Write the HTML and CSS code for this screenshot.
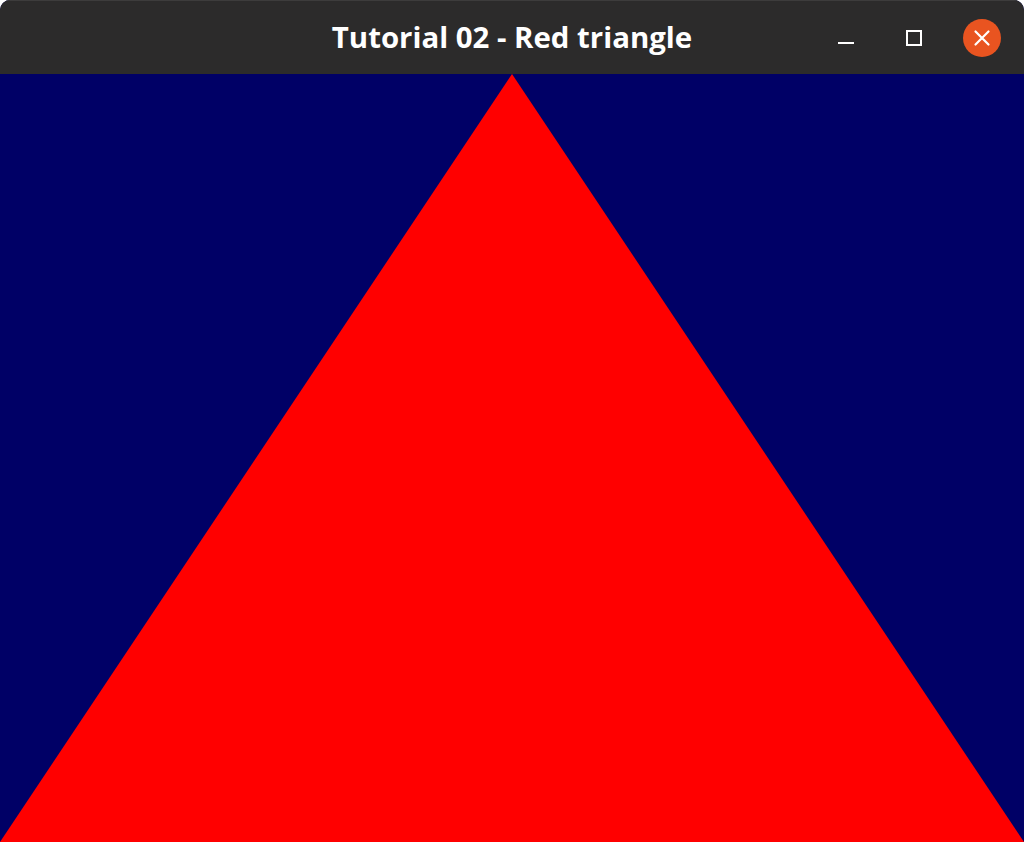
FILE: index.html
```html
<!DOCTYPE html>
<html>
<head>
  <title>Tutorial 02 - Red triangle</title>
  <meta name="viewport" content="width=device-width, initial-scale=1">
  <link rel="stylesheet" href="styles.css">
</head>
<body>
  <div class="window">
    <!-- Title bar -->
    <div class="titlebar">
      <span class="title">Tutorial 02 - Red triangle</span>
      <div class="controls">
        <button class="ctl minimize" aria-label="Minimize">
          <svg width="18" height="18" viewBox="0 0 18 18"><rect x="1" y="13" width="16" height="2" fill="#ffffff"/></svg>
        </button>
        <button class="ctl maximize" aria-label="Maximize">
          <svg width="18" height="18" viewBox="0 0 18 18"><rect x="2" y="2" width="14" height="14" fill="none" stroke="#ffffff" stroke-width="2"/></svg>
        </button>
        <button class="ctl close" aria-label="Close">
          <svg width="18" height="18" viewBox="0 0 18 18"><path d="M2.5 2.5 L15.5 15.5 M15.5 2.5 L2.5 15.5" stroke="#ffffff" stroke-width="2.2" stroke-linecap="round"/></svg>
        </button>
      </div>
    </div>

    <!-- GL canvas -->
    <div class="canvas">
      <svg class="scene" viewBox="0 0 1024 768" preserveAspectRatio="none">
        <polygon points="512,0 1024,768 0,768" fill="#ff0000"/>
      </svg>
    </div>
  </div>
</body>
</html>
```

FILE: styles.css
```css
/* Common styles */
html, body {
  margin: 0;
  padding: 0;
  height: 100%;
  background-color: #ffffff;
}

.window {
  display: flex;
  flex-direction: column;
  height: 842px;
  width: 1024px;
  overflow: hidden;
  border-radius: 10px 10px 0 0;
  background-color: #000066;
}

/* Title bar */
.titlebar {
  height: 74px;
  flex: none;
  background-color: #2c2b2b;
  border-top: 1px solid #3d3c3c;
  box-sizing: border-box;
  display: flex;
  align-items: center;
  justify-content: center;
  position: relative;
}

.title {
  color: #ffffff;
  font-family: "Open Sans", "DejaVu Sans", sans-serif;
  font-weight: 700;
  font-size: 29.4px;
  margin-top: -2px;
}

.controls {
  position: absolute;
  right: 23px;
  top: 18px;
  display: flex;
  align-items: center;
  gap: 30px;
}

.ctl {
  border: none;
  padding: 0;
  background: none;
  width: 38px;
  height: 38px;
  display: flex;
  align-items: center;
  justify-content: center;
}

.close {
  background-color: #e95420;
  border-radius: 50%;
}

/* Canvas */
.canvas {
  flex: 1;
  display: flex;
}

.scene {
  width: 100%;
  height: 100%;
  display: block;
}
```
